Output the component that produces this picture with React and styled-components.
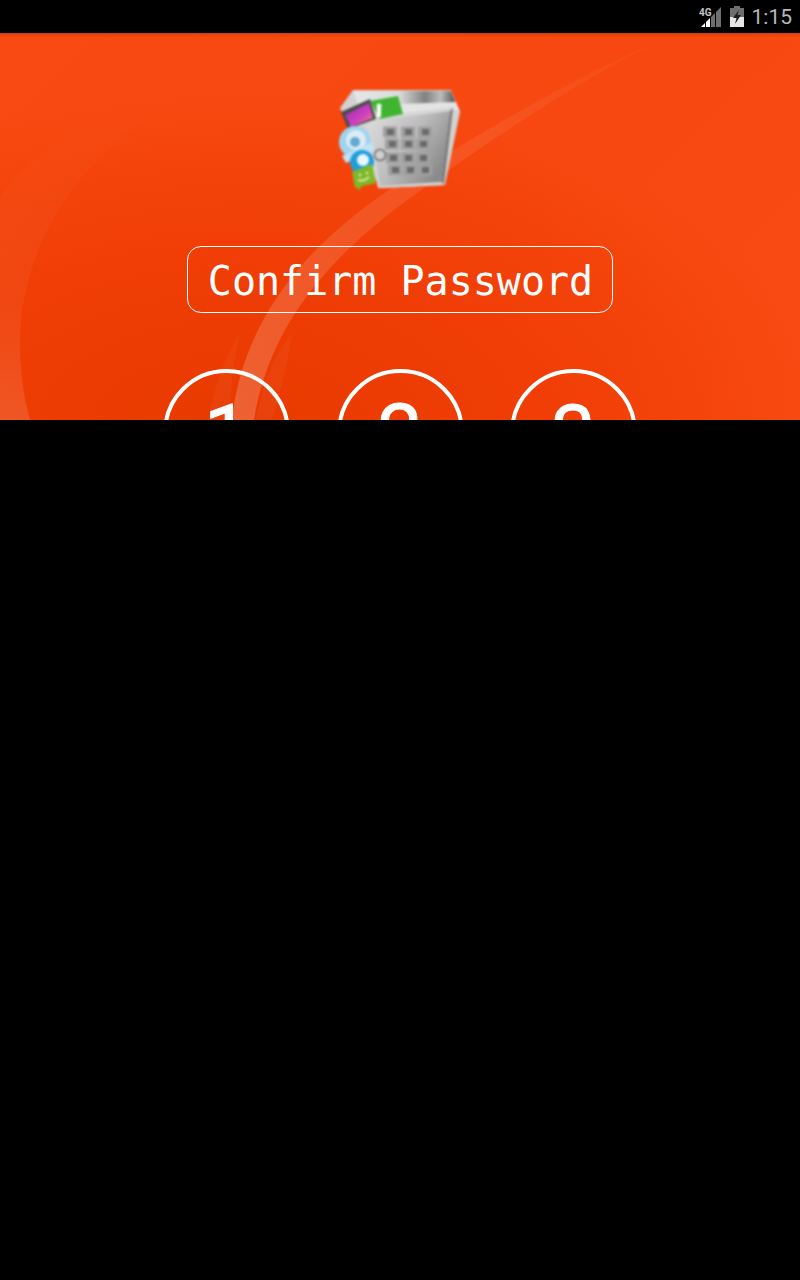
import styled, { createGlobalStyle } from "styled-components";

const GlobalStyle = createGlobalStyle`
  html, body {
    margin: 0;
    padding: 0;
    background: #000;
  }
`;

const Page = styled.div`
  width: 800px;
  height: 1280px;
  background: #000;
  overflow: hidden;
`;

const StatusBar = styled.div`
  height: 33px;
  display: flex;
  justify-content: flex-end;
  align-items: center;
  padding-right: 8px;
  background: #000;
`;

const StatusIcon = styled.svg`
  display: block;
  flex: none;
  margin-right: ${(p) => p.$gap}px;
`;

const Clock = styled.span`
  font-family: Roboto, "Liberation Sans", sans-serif;
  font-size: 21px;
  line-height: 33px;
  color: #b9b9b9;
  position: relative;
  top: 1px;
`;

const Screen = styled.div`
  position: relative;
  height: 387px;
  overflow: hidden;
  display: flex;
  flex-direction: column;
  align-items: center;
  padding-top: 57px;
  box-sizing: border-box;
  background:
    linear-gradient(180deg, rgba(190, 50, 0, 0.5) 0, rgba(190, 50, 0, 0) 4px),
    radial-gradient(ellipse 600px 340px at 230px 400px, #e83a00 0%, #f03e06 55%, rgba(245, 70, 14, 0) 100%),
    linear-gradient(135deg, #f84a12 0%, #f64810 55%, #f94b13 100%);
`;

const Swirl = styled.svg`
  position: absolute;
  left: 0;
  top: 0;
`;

const AppIcon = styled.svg`
  position: relative;
  display: block;
  flex: none;
  filter: blur(0.9px);
`;

const Title = styled.div`
  position: relative;
  flex: none;
  margin-top: 56px;
  width: 426px;
  height: 67px;
  box-sizing: border-box;
  padding: 3px 0 0 1px;
  display: flex;
  align-items: center;
  justify-content: center;
  border: 1px solid #fff;
  border-radius: 14px;
  font-family: "DejaVu Sans Mono", "Liberation Mono", monospace;
  font-size: 40px;
  color: #fff;
  white-space: pre;
`;

const Keypad = styled.div`
  position: relative;
  flex: none;
  margin-top: 56px;
  display: flex;
  gap: 46.5px;
`;

const Key = styled.div`
  width: 127px;
  height: 127px;
  box-sizing: border-box;
  flex: none;
  padding-top: 3px;
  border: 4px solid #fff;
  border-radius: 50%;
  display: flex;
  align-items: center;
  justify-content: center;
  font-family: Roboto, "Liberation Sans", sans-serif;
  font-weight: 400;
  font-size: 80px;
  line-height: 1;
  color: #fff;
  -webkit-text-stroke: 1px #fff;
  filter: blur(0.6px);
`;

const keyCells = [
  [52, 70, 87, 42],
  [54, 70, 85, 54],
  [55, 70, 85, 68],
  [57, 72, 87, 80],
];

const SafeIcon = () => (
  <AppIcon width="124" height="100" viewBox="0 0 124 100">
    <defs>
      <linearGradient id="lid" x1="0" x2="1" y1="0" y2="0">
        <stop offset="0" stopColor="#e6e6e6" />
        <stop offset="0.45" stopColor="#dcdcdc" />
        <stop offset="0.7" stopColor="#808080" />
        <stop offset="0.85" stopColor="#bdbdbd" />
        <stop offset="1" stopColor="#4c4c4c" />
      </linearGradient>
      <linearGradient id="door" x1="0" x2="1" y1="0" y2="0.6">
        <stop offset="0" stopColor="#dedede" />
        <stop offset="0.55" stopColor="#bcbcbc" />
        <stop offset="1" stopColor="#8a8a8a" />
      </linearGradient>
      <linearGradient id="photo" x1="0" x2="1" y1="0" y2="1">
        <stop offset="0" stopColor="#8c2fb0" />
        <stop offset="0.6" stopColor="#d43fc0" />
        <stop offset="1" stopColor="#e8a060" />
      </linearGradient>
    </defs>
    <polygon points="2,18 15,0 113,0 122,22 107,95 42,98" fill="#d2d2d2" />
    <polygon points="15,1 113,1 118,14 20,14" fill="url(#lid)" />
    <polygon points="60,14 118,12 122,22 113,18 60,24" fill="#e4e4e4" />
    <polygon points="27,28 115,17 106,95 40,98" fill="#d6d6d6" />
    <polygon points="31,31 112,21 103,92 42,96" fill="url(#door)" />
    <polygon points="112,21 115,18 106,94 103,92" fill="#7c7c7c" />
    {keyCells.map(([a, b, c, y]) =>
      [a, b, c].map((x) => (
        <g key={`${x}-${y}`}>
          <rect x={x - 7} y={y - 5.5} width="14" height="11" rx="1" fill="#a0a0a0" />
          <rect x={x - 3} y={y - 3} width="7" height="6" fill="#6a6a6a" />
        </g>
      ))
    )}
    <circle cx="42" cy="65" r="5.5" fill="#cfcfcf" stroke="#6f6f6f" strokeWidth="1.5" />
    <polygon points="3,22 32,9 38,29 10,39" fill="#4a4a4a" />
    <polygon points="7,25 31,13 35,28 13,37" fill="url(#photo)" />
    <polygon points="32,11 60,6 65,24 42,29" fill="#3fb52f" />
    <circle cx="41" cy="16" r="2.5" fill="#fff" />
    <rect x="39" y="17" width="4" height="10" fill="#fff" />
    <circle cx="17" cy="52" r="16" fill="#9fd4ee" />
    <circle cx="18" cy="50" r="10" fill="#dcecf4" />
    <circle cx="17" cy="52" r="5" fill="#63a9d0" />
    <polygon points="4,66 34,52 37,59 8,73" fill="#bfe2f4" />
    <circle cx="24" cy="72" r="12" fill="#1e9fdc" />
    <circle cx="25" cy="70" r="6" fill="#eaf6fc" />
    <polygon points="14,82 34,74 38,93 24,96 21,100 18,97 17,98" fill="#7fb82a" />
    <circle cx="22" cy="85" r="1.2" fill="#e8f5c8" />
    <circle cx="29" cy="83" r="1.2" fill="#e8f5c8" />
    <path d="M20 90 Q26 92 31 87" stroke="#e8f5c8" strokeWidth="1.4" fill="none" />
  </AppIcon>
);

const SwirlArt = () => (
  <Swirl width="800" height="387" viewBox="0 0 800 387">
    <defs>
      <linearGradient id="sweep" x1="0" x2="0" y1="1" y2="0">
        <stop offset="0" stopColor="#fff" stopOpacity="0.13" />
        <stop offset="0.35" stopColor="#fff" stopOpacity="0.05" />
        <stop offset="0.75" stopColor="#fff" stopOpacity="0.015" />
        <stop offset="1" stopColor="#fff" stopOpacity="0" />
      </linearGradient>
      <linearGradient id="ribbon" x1="0" x2="1" y1="1" y2="0">
        <stop offset="0" stopColor="#fff" stopOpacity="0.2" />
        <stop offset="0.45" stopColor="#fff" stopOpacity="0.1" />
        <stop offset="1" stopColor="#fff" stopOpacity="0.02" />
      </linearGradient>
    </defs>
    <path d="M0 164 C40 110 100 70 190 62 C110 95 20 190 20 310 C20 340 24 365 30 387 L0 387 Z" fill="url(#sweep)" />
    <path d="M232 387 C240 310 282 225 400 150 C480 100 580 40 670 4 C590 40 500 100 420 158 C320 228 268 300 254 387 Z" fill="url(#ribbon)" />
    <path d="M208 387 C214 355 224 325 240 300 C234 325 230 355 230 387 Z" fill="#fff" fillOpacity="0.04" />
    <path d="M256 387 C262 355 272 325 292 300 C288 330 280 360 272 387 Z" fill="#fff" fillOpacity="0.04" />
  </Swirl>
);

export default function App() {
  return (
    <Page>
      <GlobalStyle />
      <StatusBar>
        <StatusIcon $gap={7} width="24" height="24" viewBox="0 0 24 24">
          <polygon points="2,22 6,18 6,22" fill="#fff" />
          <polygon points="7,17 11,13 11,22 7,22" fill="#fff" />
          <polygon points="12,12 16,8 16,22 12,22" fill="#6e6e6e" />
          <polygon points="17,7 22,2 22,22 17,22" fill="#6e6e6e" />
          <text x="0" y="11" fontFamily="Roboto, sans-serif" fontWeight="700" fontSize="10" fill="#c4c4c4">4G</text>
        </StatusIcon>
        <StatusIcon $gap={8} width="14" height="22" viewBox="0 0 14 22">
          <rect x="4" y="0" width="6" height="2" fill="#6e6e6e" />
          <rect x="0" y="2" width="14" height="9" fill="#6e6e6e" />
          <rect x="0" y="11" width="14" height="10" fill="#e6e6e6" />
          <polygon points="9,4 3,12 6.5,12 5,18 11,9 7.5,9" fill="#1c1c1c" />
        </StatusIcon>
        <Clock>1:15</Clock>
      </StatusBar>
      <Screen>
        <SwirlArt />
        <SafeIcon />
        <Title>Confirm Password</Title>
        <Keypad>
          <Key>1</Key>
          <Key>2</Key>
          <Key>3</Key>
        </Keypad>
      </Screen>
    </Page>
  );
}
